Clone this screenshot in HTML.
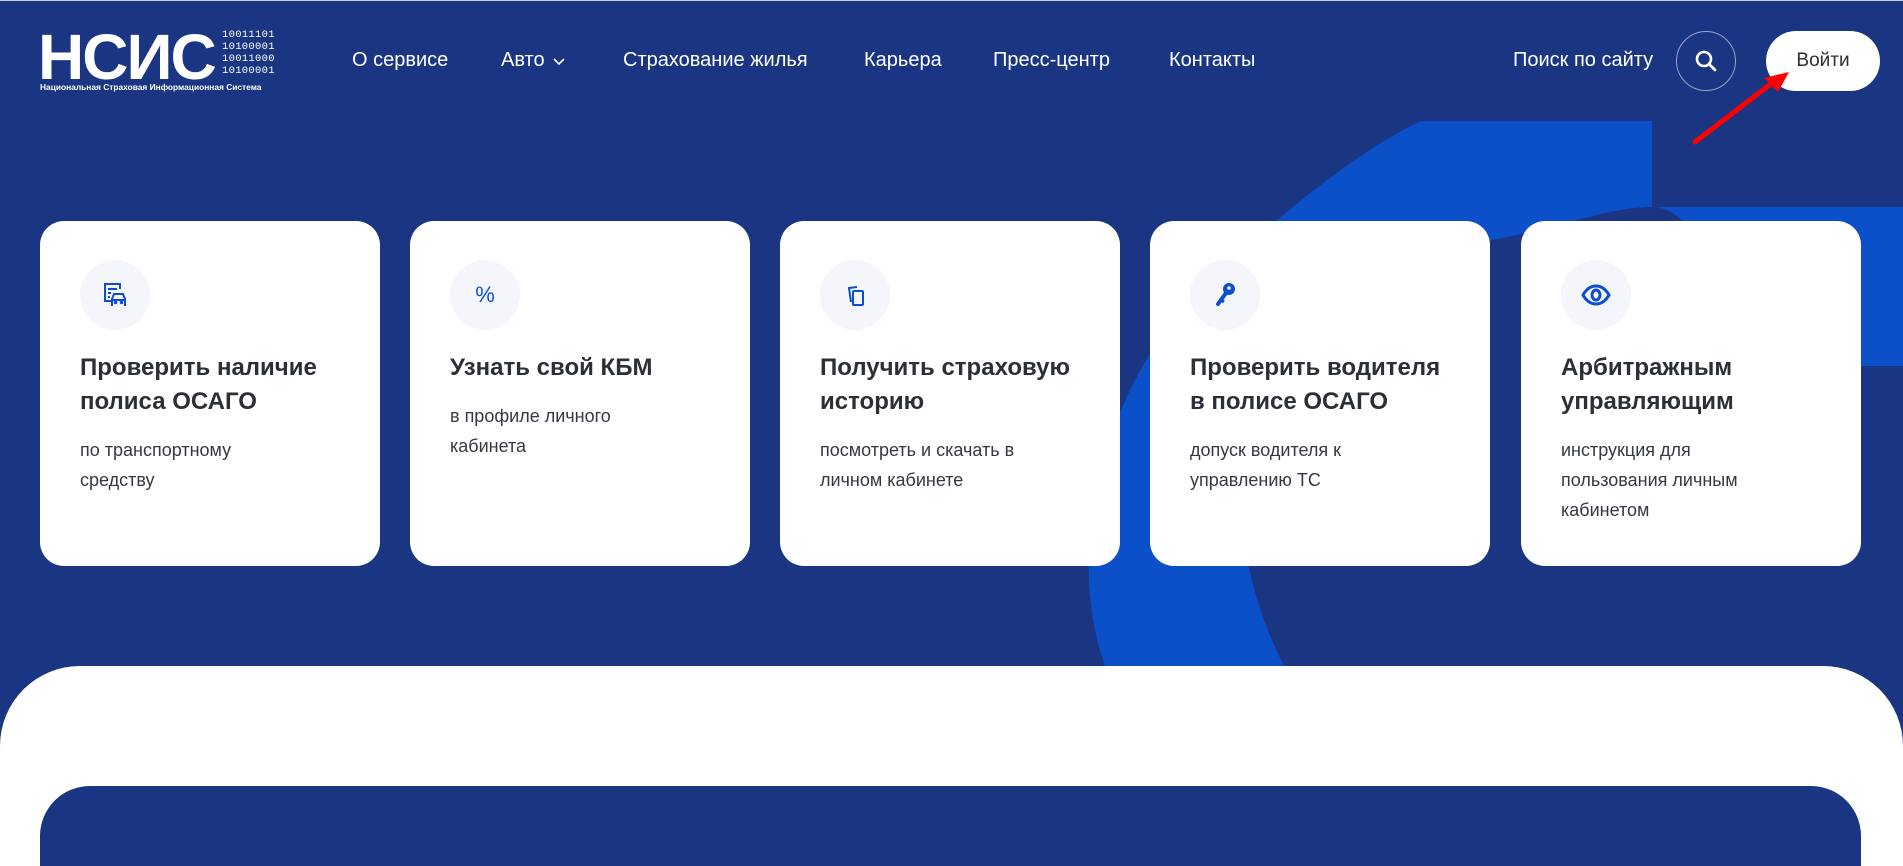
<!DOCTYPE html>
<html style="overflow:hidden;height:866px"><head><meta charset="utf-8"><style>
*{margin:0;padding:0;box-sizing:border-box}
body{width:1903px;height:866px;overflow:hidden;background:#1a3582;font-family:"Liberation Sans","Noto Sans CJK SC",sans-serif;position:relative}
.abs{position:absolute}
.nav{color:#fff;font-size:20px;top:49px;white-space:nowrap}
.card{position:absolute;top:221px;width:340px;height:345px;background:#fff;border-radius:24px}
.ic{position:absolute;left:40px;top:39px;width:70px;height:70px;border-radius:50%;background:#f4f6fb;display:flex;align-items:center;justify-content:center}
.tt{position:absolute;left:40px;top:351px;font-size:24px;font-weight:bold;line-height:34px;color:#2b2f36;white-space:nowrap}
.st{font-size:18px;line-height:30px;color:#333842;margin-top:16px;font-weight:normal}
</style></head><body>
<div class="abs" style="left:0;top:0;width:1903px;height:1px;background:#c8cbd2"></div>
<svg class="abs" style="left:0;top:0" width="1903" height="866">
<path d="M1105,666 C1060,540 1110,360 1230,260 C1300,200 1360,150 1421,121 L1652,121 L1652,207 L1903,207 L1903,366 L1903,666 Z" fill="#0b50c8"/>
<path d="M1284,666 C1230,560 1220,420 1290,350 C1360,280 1420,250 1492,240 C1570,225 1610,207 1652,207 C1700,207 1730,300 1730,366 L1903,366 L1903,666 Z" fill="#1a3582"/>
</svg>
<div class="abs" style="left:38px;top:20px;font-size:64px;font-weight:bold;color:#fff;letter-spacing:-2px;line-height:74px">НСИС</div>
<div class="abs" style="left:222px;top:29px;font-family:'Liberation Mono',monospace;font-size:10.5px;line-height:12px;color:#fff;letter-spacing:0.3px">10011101<br>10100001<br>10011000<br>10100001</div>
<div class="abs" style="left:40px;top:82px;font-size:8.4px;color:#fff;white-space:nowrap;font-weight:bold">Национальная Страховая Информационная Система</div>
<div class="abs nav" style="left:352px">О сервисе</div>
<div class="abs nav" style="left:501px">Авто <svg width="14" height="10" style="margin-left:2px"><path d="M2 3l5 5 5-5" stroke="#fff" stroke-width="1.6" fill="none"/></svg></div>
<div class="abs nav" style="left:623px">Страхование жилья</div>
<div class="abs nav" style="left:864px">Карьера</div>
<div class="abs nav" style="left:993px">Пресс-центр</div>
<div class="abs nav" style="left:1169px">Контакты</div>
<div class="abs nav" style="left:1513px">Поиск по сайту</div>
<div class="abs" style="left:1676px;top:31px;width:60px;height:60px;border-radius:50%;border:1px solid rgba(255,255,255,.55)">
<svg width="58" height="58"><circle cx="27" cy="27" r="7" stroke="#fff" stroke-width="2.6" fill="none"/><path d="M32 32l6 6" stroke="#fff" stroke-width="2.8" stroke-linecap="round"/></svg></div>
<div class="abs" style="left:1766px;top:31px;width:114px;height:60px;border-radius:30px;background:#fff;color:#2b2f36;font-size:19px;line-height:60px;text-align:center">Войти</div>
<svg class="abs" style="left:0;top:0" width="1903" height="200"><path d="M1695,142 L1772,83" stroke="#f00" stroke-width="5" stroke-linecap="round"/><path d="M1789,72 L1764,78 L1778,92 Z" fill="#f00"/></svg>

<div class="card" style="left:40px"><div class="ic"><svg width="28" height="28" viewBox="0 0 28 28" fill="none" stroke="#0b4fd0" stroke-width="2"><path d="M10 20H4V3h15v5"/><path d="M7 8h9M7 12h3M7 16h2"/><path d="M11 25v-7l2-5h9l2 5v7M11 19h13"/><circle cx="14.5" cy="21.5" r=".8" fill="#0b4fd0"/><circle cx="20.5" cy="21.5" r=".8" fill="#0b4fd0"/></svg></div>
<div class="tt" style="left:40px;top:130px">Проверить наличие<br>полиса ОСАГО<div class="st">по транспортному<br>средству</div></div></div>
<div class="card" style="left:410px"><div class="ic"><span style="color:#0b4fd0;font-size:22px">%</span></div>
<div class="tt" style="left:40px;top:130px">Узнать свой КБМ<div class="st">в профиле личного<br>кабинета</div></div></div>
<div class="card" style="left:780px"><div class="ic"><svg width="26" height="26" viewBox="0 0 26 26" fill="none" stroke="#0b4fd0" stroke-width="2"><path d="M9 20L7 6l8-1"/><rect x="11" y="9" width="10" height="14" rx="1"/></svg></div>
<div class="tt" style="left:40px;top:130px">Получить страховую<br>историю<div class="st">посмотреть и скачать в<br>личном кабинете</div></div></div>
<div class="card" style="left:1150px"><div class="ic"><svg width="26" height="28" viewBox="0 0 26 28"><circle cx="17" cy="8" r="6" fill="#0b4fd0"/><circle cx="17" cy="7" r="1.8" fill="#f4f6fb"/><path d="M14 12L6 23" stroke="#0b4fd0" stroke-width="4" stroke-linecap="round"/><path d="M9 19l3 2" stroke="#0b4fd0" stroke-width="3"/></svg></div>
<div class="tt" style="left:40px;top:130px">Проверить водителя<br>в полисе ОСАГО<div class="st">допуск водителя к<br>управлению ТС</div></div></div>
<div class="card" style="left:1521px"><div class="ic"><svg width="32" height="26" viewBox="0 0 32 26" fill="none" stroke="#0b4fd0" stroke-width="3"><path d="M3 13C7 6 12 4 16 4s9 2 13 9c-4 7-9 9-13 9s-9-2-13-9z"/><ellipse cx="16" cy="13" rx="4" ry="5"/></svg></div>
<div class="tt" style="left:40px;top:130px">Арбитражным<br>управляющим<div class="st">инструкция для<br>пользования личным<br>кабинетом</div></div></div>

<div class="abs" style="left:0;top:666px;width:1903px;height:200px;background:#fff;border-radius:80px 80px 0 0"></div>
<div class="abs" style="left:40px;top:786px;width:1821px;height:80px;background:#1a3582;border-radius:50px 50px 0 0"></div>
</body></html>
